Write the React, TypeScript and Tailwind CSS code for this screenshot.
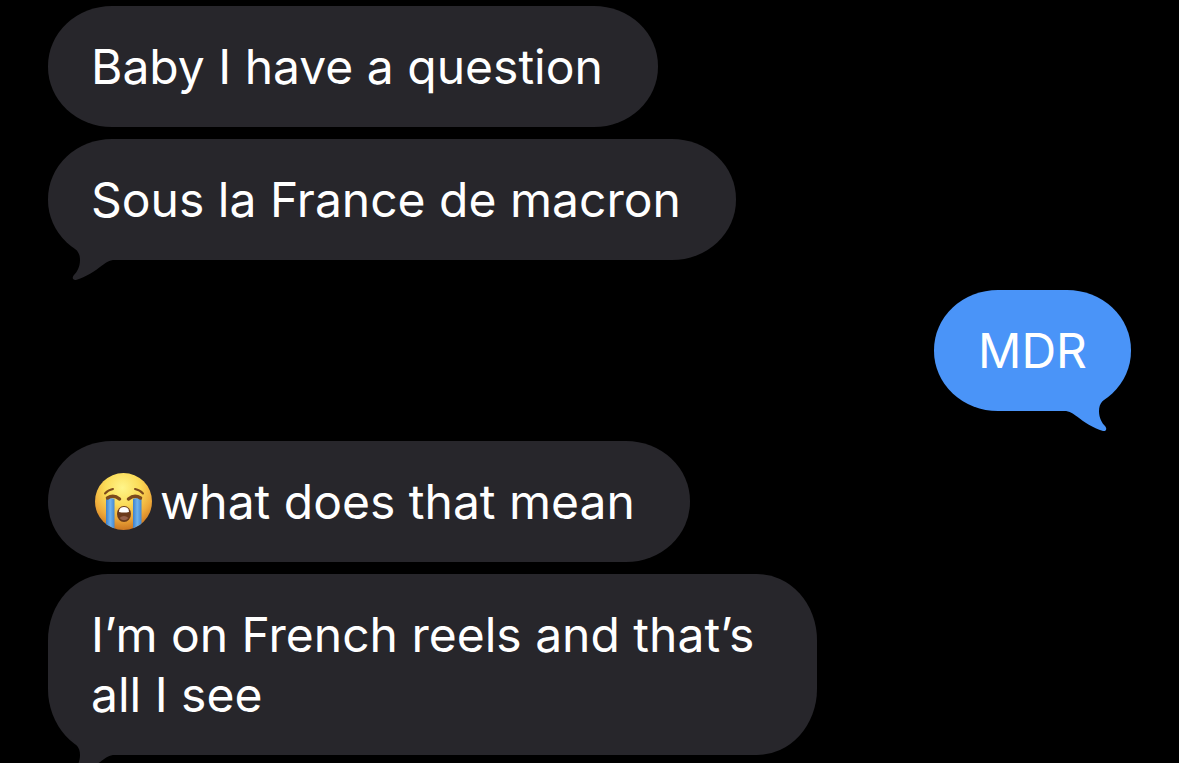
type Message = {
  id: number
  text: string
  sent?: boolean
  emoji?: boolean
  tail?: boolean
  tall?: boolean
}

const messages: Message[] = [
  { id: 1, text: "Baby I have a question" },
  { id: 2, text: "Sous la France de macron", tail: true },
  { id: 3, text: "MDR", sent: true, tail: true },
  { id: 4, text: "what does that mean", emoji: true },
  { id: 5, text: "I’m on French reels and that’s all I see", tail: true, tall: true },
]

function Tail({ sent }: { sent?: boolean }) {
  return (
    <svg
      viewBox="0 0 50 42"
      aria-hidden="true"
      className={`absolute -bottom-[22px] h-[42px] w-[50px] fill-current ${
        sent ? "right-5 -scale-x-100 text-[#4a94f8]" : "left-5 text-[#27262b]"
      }`}
    >
      <path d="M0 2C8 9 12 12 12 20C12 27 9 32 6 35C3.500 38 5 40.500 8 40C18 37 27 31 34 25.500C38 22.500 41 20 47 20V0H2Z" />
    </svg>
  )
}

function CryingFace() {
  return (
    <svg
      viewBox="0 0 57 57"
      role="img"
      aria-label="Loudly crying face"
      className="mr-2 mb-0.5 ml-1 h-[57px] w-[57px] shrink-0"
    >
      <defs>
        <radialGradient id="face" cx="0.48" cy="0.26" r="0.76">
          <stop offset="0" stopColor="#fff58a" />
          <stop offset="0.4" stopColor="#fbdc58" />
          <stop offset="0.72" stopColor="#eeaa3a" />
          <stop offset="1" stopColor="#c8711f" />
        </radialGradient>
        <linearGradient id="tear" x1="0" y1="0" x2="1" y2="0">
          <stop offset="0" stopColor="#3d80cb" />
          <stop offset="0.5" stopColor="#6fb2ec" />
          <stop offset="1" stopColor="#4389d3" />
        </linearGradient>
        <clipPath id="head">
          <circle cx="28.500" cy="28.500" r="28.500" />
        </clipPath>
      </defs>
      <circle cx="28.500" cy="28.500" r="28.500" fill="url(#face)" />
      <g clipPath="url(#head)" fill="url(#tear)">
        <path d="M11 26q4-2 8.500 0v30H11Z" />
        <path d="M38 26q4-2 8.500 0v30H38Z" />
      </g>
      <g fill="none" stroke="#7d4a1c" strokeLinecap="round">
        <path d="M10 20.500q3-3.500 8-4.500M48 20.500q-3-3.500-8-4.500" strokeWidth="2" />
        <path d="M12.500 25q6-4 12 1M33.500 26q6-5 12-1" strokeWidth="3.500" />
      </g>
      <ellipse cx="29" cy="41" rx="7" ry="8" fill="#6b3a1b" />
      <path d="M24 39q0-5 5-5t5 5q-5 1-10 0Z" fill="#fff" />
      <path d="M24.500 45q4.500-4 9 0q-4.500 4.500-9 0Z" fill="#94604a" />
    </svg>
  )
}

function Bubble({ text, sent, emoji, tail, tall }: Message) {
  return (
    <div
      className={`relative flex max-w-[769px] items-center pt-[31px] pb-[30px] text-5xl leading-[60px] ${
        sent ? "self-end bg-[#4a94f8] px-11" : "self-start bg-[#27262b] pr-[55px] pl-[43px]"
      } ${tall ? "rounded-[60px/66px]" : "rounded-[64px/60px]"}`}
    >
      {emoji && <CryingFace />}
      <p>{text}</p>
      {tail && <Tail sent={sent} />}
    </div>
  )
}

export default function App() {
  return (
    <main className="flex h-screen flex-col overflow-hidden bg-black px-12 pt-1.5 font-['Inter','Liberation_Sans',sans-serif] text-white">
      {messages.map((message, i) => {
        const previous = messages[i - 1]
        const gap = !previous ? "" : previous.tail ? "mt-[30px]" : "mt-3"
        return (
          <div key={message.id} className={`flex shrink-0 flex-col ${gap}`}>
            <Bubble {...message} />
          </div>
        )
      })}
    </main>
  )
}
